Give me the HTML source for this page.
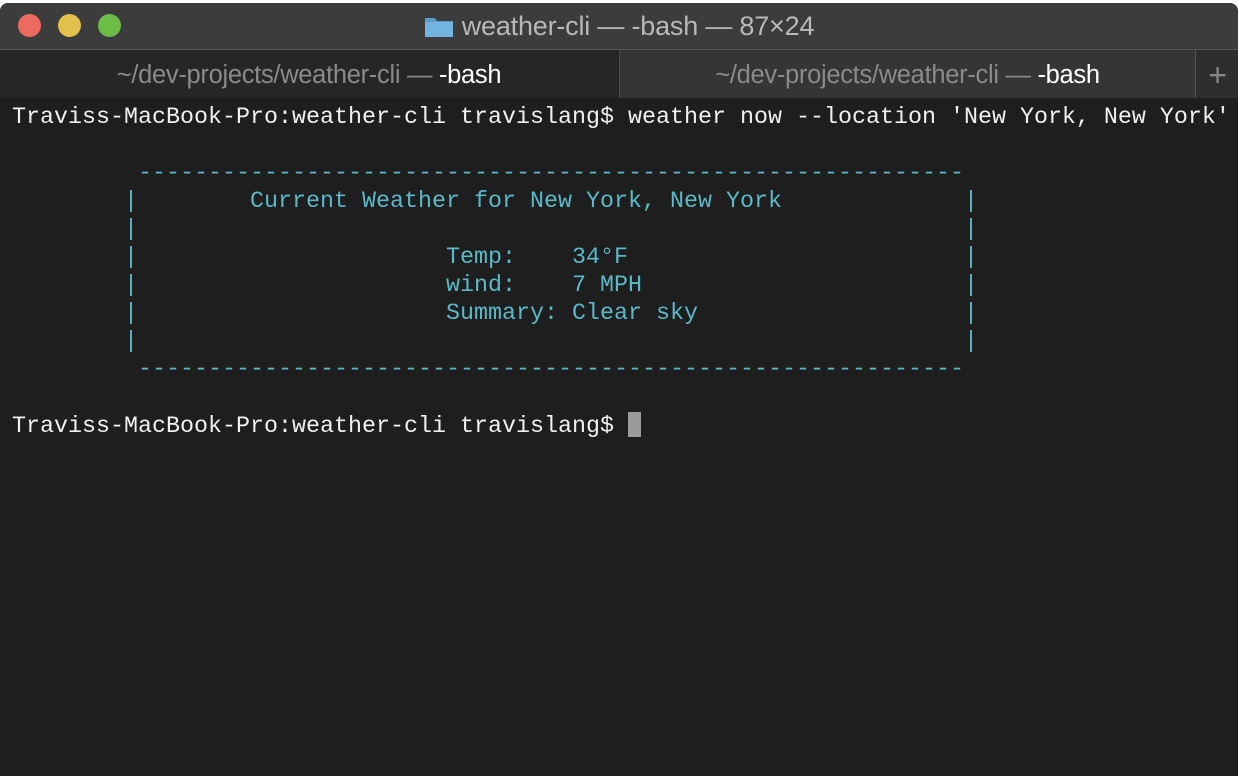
<!DOCTYPE html>
<html><head><meta charset="utf-8"><style>
html,body{margin:0;padding:0;width:1238px;height:776px;overflow:hidden;background:#fff}
.win{position:absolute;left:0;top:3px;width:1238px;height:773px;background:#1e1e1e;border-radius:8px 8px 0 0;overflow:hidden}
.title{position:absolute;left:0;top:0;width:1238px;height:46px;background:#3c3c3c;}
.dot{position:absolute;top:11px;width:23px;height:23px;border-radius:50%}
.ttl{position:absolute;top:8px;left:0;width:1238px;text-align:center;font:27px "Liberation Sans",sans-serif;color:#b8b8b8;letter-spacing:-0.2px}
.tabs{position:absolute;top:46px;left:0;width:1238px;height:48px;background:#262626;border-top:1px solid #555}
.tab{position:absolute;top:0;height:48px;text-align:center;font:25.5px/50px "Liberation Sans",sans-serif;color:#8a8a8a;letter-spacing:-0.3px}
.tab b{font-weight:normal;color:#fff}
pre{position:absolute;left:12px;top:101px;margin:0;font:23.33px/28px "Liberation Mono",monospace;color:#f0f0f0}
.c{color:#5ab9c9}
.cur{display:inline-block;width:13px;height:25px;background:#9a9a9a;vertical-align:-5px}
</style></head><body>
<div class="win">
<div class="title">
<div class="dot" style="left:18px;background:#ed6a5e"></div>
<div class="dot" style="left:58px;background:#e2c04c"></div>
<div class="dot" style="left:98px;background:#6cbd45"></div>
<div class="ttl"><svg width="30" height="23" viewBox="0 0 30 23" style="vertical-align:-3px;margin-right:8px"><path d="M1 3h10l2 3h16v16H1z" fill="#5b9ccb"/><rect x="1" y="7" width="28" height="15" fill="#72b3e0"/></svg>weather-cli — -bash — 87×24</div>
</div>
<div class="tabs">
<div class="tab" style="left:0;width:618px">~/dev-projects/weather-cli — <b>-bash</b></div>
<div class="tab" style="left:619px;width:575px;background:#353535;border-left:1px solid #4a4a4a">~/dev-projects/weather-cli — <b>-bash</b></div>
<div class="tab" style="left:1195px;width:43px;background:#2e2e2e;border-left:1px solid #555;font-size:32px;color:#888">+</div>
</div>
<pre>Traviss-MacBook-Pro:weather-cli travislang$ weather now --location 'New York, New York'
<span class="c">
         -----------------------------------------------------------
        |        Current Weather for New York, New York             |
        |                                                           |
        |                      Temp:    34°F                        |
        |                      wind:    7 MPH                       |
        |                      Summary: Clear sky                   |
        |                                                           |
         -----------------------------------------------------------
</span>
Traviss-MacBook-Pro:weather-cli travislang$ <span class="cur"></span></pre>
</div>
</body></html>
